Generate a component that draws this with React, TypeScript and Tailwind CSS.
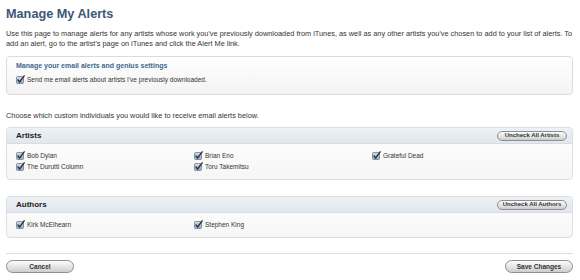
import React from 'react'

const ARTISTS = ['Bob Dylan', 'Brian Eno', 'Grateful Dead', 'The Durutti Column', 'Toru Takemitsu']
const AUTHORS = ['Kirk McElhearn', 'Stephen King']

function Check() {
  return (
    <svg width="9" height="9" viewBox="0 0 9 9" className="shrink-0">
      <defs>
        <linearGradient id="cb" x1="0" y1="0" x2="0" y2="1">
          <stop offset="0" stopColor="#d3dbe6" />
          <stop offset="1" stopColor="#98a9c0" />
        </linearGradient>
      </defs>
      <rect x="0.5" y="1.5" width="7" height="7" rx="1" fill="url(#cb)" stroke="#6f7f94" strokeWidth="0.8" />
      <path d="M2 5 L3.6 7 L8.2 0.8" fill="none" stroke="#2b2f36" strokeWidth="1.3" strokeLinecap="round" strokeLinejoin="round" />
    </svg>
  )
}

function CheckRow({ label }: { label: string }) {
  return (
    <div className="flex h-[11px] items-center gap-[2px]">
      <Check />
      <span className="text-[6.5px] leading-[11px] text-[#333]">{label}</span>
    </div>
  )
}

function PillButton({ label, className = '' }: { label: string; className?: string }) {
  return (
    <button
      className={`flex items-center justify-center rounded-full border border-[#8e8e8e] bg-gradient-to-b from-[#fbfbfb] via-[#e6e6e6] to-[#cccccc] font-bold text-[#333] ${className}`}
    >
      {label}
    </button>
  )
}

function Section({ title, button, items, className = '' }: { title: string; button: string; items: string[]; className?: string }) {
  return (
    <div className={`rounded-[4px] border border-[#dedede] bg-gradient-to-b from-white to-[#f6f6f6] ${className}`}>
      <div className="flex h-[16px] items-center justify-between rounded-t-[4px] border-b border-[#d8dde4] bg-gradient-to-b from-[#eef1f5] to-[#e1e7ef] pl-[9px] pr-[5px]">
        <span className="text-[8px] font-bold text-[#222]">{title}</span>
        <PillButton label={button} className="h-[10px] w-[70px] text-[6px]" />
      </div>
      <div className="grid grid-cols-[178px_178px_178px] px-[9px] pb-[7px] pt-[6px]">
        {items.map((it) => (
          <CheckRow key={it} label={it} />
        ))}
      </div>
    </div>
  )
}

export default function App() {
  return (
    <div className="h-[280px] w-[580px] overflow-hidden bg-white pl-[6px] pr-[7px] font-['Liberation_Sans',Arial,sans-serif] text-[#333]">
      <h1 className="h-[28px] text-[12.7px] font-bold leading-[28px] text-[#3d5774]">Manage My Alerts</h1>

      <p className="mt-[1px] text-[7.35px] leading-[10px] text-[#333]">
        Use this page to manage alerts for any artists whose work you've previously downloaded from iTunes, as well as any other artists you've chosen to add to your list of alerts. To add an alert, go to the artist's page on iTunes and click the Alert Me link.
      </p>

      <div className="mt-[7px] h-[39px] rounded-[4px] border border-[#dcdcdc] bg-gradient-to-b from-white to-[#f3f3f3] px-[9px] pt-[4px]">
        <div className="text-[7px] font-bold leading-[10px] text-[#41678f]">Manage your email alerts and genius settings</div>
        <div className="mt-[3px]">
          <CheckRow label="Send me email alerts about artists I've previously downloaded." />
        </div>
      </div>

      <p className="mt-[16px] text-[7.35px] leading-[10px]">Choose which custom individuals you would like to receive email alerts below.</p>

      <Section title="Artists" button="Uncheck All Artists" items={ARTISTS} className="mt-[6px]" />
      <Section title="Authors" button="Uncheck All Authors" items={AUTHORS} className="mt-[16px]" />

      <div className="mt-[15px] border-t border-[#dddddd]" />

      <div className="mt-[6px] flex justify-between">
        <PillButton label="Cancel" className="h-[13px] w-[68px] text-[6.5px]" />
        <PillButton label="Save Changes" className="h-[13px] w-[68px] text-[6.5px]" />
      </div>
    </div>
  )
}
